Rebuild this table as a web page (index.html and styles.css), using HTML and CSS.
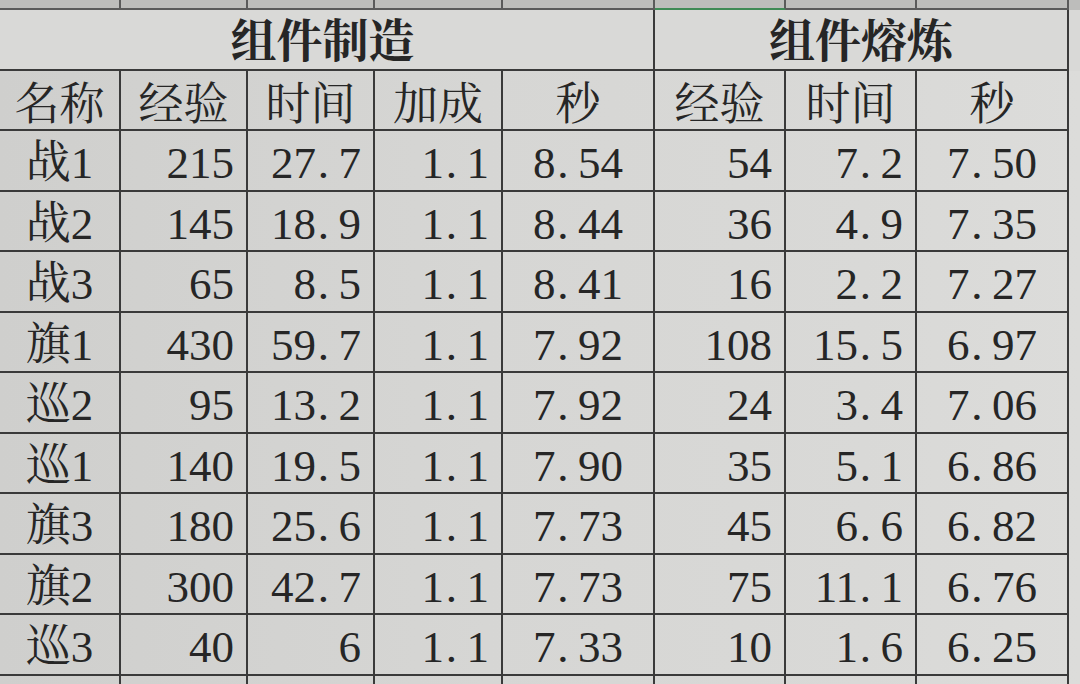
FILE: index.html
```html
<!DOCTYPE html>
<html lang="zh-CN">
<head>
<meta charset="utf-8">
<title>组件制造 / 组件熔炼</title>
<link rel="stylesheet" href="styles.css">
</head>
<body>
<div class="sheet">
  <div class="row top">
    <div class="cell"></div><div class="cell"></div><div class="cell"></div><div class="cell"></div>
    <div class="cell"></div><div class="cell sel"></div><div class="cell"></div><div class="cell"></div>
  </div>
  <div class="row title">
    <div class="cell t1">组件制造</div>
    <div class="cell t2">组件熔炼</div>
  </div>
  <div class="row head">
    <div class="cell c">名称</div>
    <div class="cell c">经验</div>
    <div class="cell c">时间</div>
    <div class="cell c">加成</div>
    <div class="cell c">秒</div>
    <div class="cell c">经验</div>
    <div class="cell c">时间</div>
    <div class="cell c">秒</div>
  </div>
  <div class="row">
    <div class="cell c">战1</div><div class="cell r">215</div><div class="cell r">27<span class="d">.</span>7</div><div class="cell r">1<span class="d">.</span>1</div><div class="cell c">8<span class="d">.</span>54</div>
    <div class="cell r">54</div><div class="cell r">7<span class="d">.</span>2</div><div class="cell c">7<span class="d">.</span>50</div>
  </div>
  <div class="row">
    <div class="cell c">战2</div><div class="cell r">145</div><div class="cell r">18<span class="d">.</span>9</div><div class="cell r">1<span class="d">.</span>1</div><div class="cell c">8<span class="d">.</span>44</div>
    <div class="cell r">36</div><div class="cell r">4<span class="d">.</span>9</div><div class="cell c">7<span class="d">.</span>35</div>
  </div>
  <div class="row">
    <div class="cell c">战3</div><div class="cell r">65</div><div class="cell r">8<span class="d">.</span>5</div><div class="cell r">1<span class="d">.</span>1</div><div class="cell c">8<span class="d">.</span>41</div>
    <div class="cell r">16</div><div class="cell r">2<span class="d">.</span>2</div><div class="cell c">7<span class="d">.</span>27</div>
  </div>
  <div class="row">
    <div class="cell c">旗1</div><div class="cell r">430</div><div class="cell r">59<span class="d">.</span>7</div><div class="cell r">1<span class="d">.</span>1</div><div class="cell c">7<span class="d">.</span>92</div>
    <div class="cell r">108</div><div class="cell r">15<span class="d">.</span>5</div><div class="cell c">6<span class="d">.</span>97</div>
  </div>
  <div class="row">
    <div class="cell c">巡2</div><div class="cell r">95</div><div class="cell r">13<span class="d">.</span>2</div><div class="cell r">1<span class="d">.</span>1</div><div class="cell c">7<span class="d">.</span>92</div>
    <div class="cell r">24</div><div class="cell r">3<span class="d">.</span>4</div><div class="cell c">7<span class="d">.</span>06</div>
  </div>
  <div class="row">
    <div class="cell c">巡1</div><div class="cell r">140</div><div class="cell r">19<span class="d">.</span>5</div><div class="cell r">1<span class="d">.</span>1</div><div class="cell c">7<span class="d">.</span>90</div>
    <div class="cell r">35</div><div class="cell r">5<span class="d">.</span>1</div><div class="cell c">6<span class="d">.</span>86</div>
  </div>
  <div class="row">
    <div class="cell c">旗3</div><div class="cell r">180</div><div class="cell r">25<span class="d">.</span>6</div><div class="cell r">1<span class="d">.</span>1</div><div class="cell c">7<span class="d">.</span>73</div>
    <div class="cell r">45</div><div class="cell r">6<span class="d">.</span>6</div><div class="cell c">6<span class="d">.</span>82</div>
  </div>
  <div class="row">
    <div class="cell c">旗2</div><div class="cell r">300</div><div class="cell r">42<span class="d">.</span>7</div><div class="cell r">1<span class="d">.</span>1</div><div class="cell c">7<span class="d">.</span>73</div>
    <div class="cell r">75</div><div class="cell r">11<span class="d">.</span>1</div><div class="cell c">6<span class="d">.</span>76</div>
  </div>
  <div class="row">
    <div class="cell c">巡3</div><div class="cell r">40</div><div class="cell r">6</div><div class="cell r">1<span class="d">.</span>1</div><div class="cell c">7<span class="d">.</span>33</div>
    <div class="cell r">10</div><div class="cell r">1<span class="d">.</span>6</div><div class="cell c">6<span class="d">.</span>25</div>
  </div>
  <div class="row tail">
    <div class="cell"></div><div class="cell"></div><div class="cell"></div><div class="cell"></div>
    <div class="cell"></div><div class="cell"></div><div class="cell"></div><div class="cell"></div>
  </div>
</div>
</body>
</html>
```

FILE: styles.css
```css
html, body {
  margin: 0;
  padding: 0;
}
body {
  width: 1080px;
  height: 684px;
  overflow: hidden;
  background: linear-gradient(90deg, #cfcfcd 0%, #d6d6d4 45%, #d9d9d7 80%, #dcdcda 100%);
  font-family: "Liberation Serif", "Noto Serif CJK SC", "Noto Sans CJK SC", serif;
  color: #262626;
}
.sheet {
  display: flex;
  flex-direction: column;
  width: 1080px;
  height: 684px;
  overflow: hidden;
}
.row {
  display: grid;
  grid-template-columns: 121px 127px 127px 128px 152px 131px 131px 152px;
  height: 60.5px;
  flex: none;
}
.cell {
  box-sizing: border-box;
  border-right: 2px solid #3a3a3a;
  border-bottom: 2px solid #3a3a3a;
  display: flex;
  align-items: center;
  padding-top: 7px;
  font-size: 45px;
  line-height: 1;
  white-space: nowrap;
  overflow: hidden;
}
.c {
  justify-content: center;
}
.r {
  justify-content: flex-end;
  padding-right: 12px;
}
.d {
  display: inline-block;
  width: 0.5em;
  text-align: left;
  padding-left: 0.04em;
  box-sizing: border-box;
}
.top {
  height: 10px;
  background: #bdbdbb;
}
.top .cell {
  border-color: #5a5a5a;
  padding: 0;
}
.top .sel {
  border-bottom-color: #3f8a55;
}
.title {
  height: 61px;
  background: #d9d9d7;
}
.title .cell {
  justify-content: center;
  font-weight: bold;
  font-size: 46px;
  padding-top: 4px;
}
.t1 {
  grid-column: 1 / 6;
  padding-right: 8px;
}
.t2 {
  grid-column: 6 / 9;
}
.head {
  height: 60px;
}
.head .cell {
  padding-top: 10px;
}
.tail {
  height: 8px;
}
.tail .cell {
  border-bottom: none;
  padding: 0;
}
```
